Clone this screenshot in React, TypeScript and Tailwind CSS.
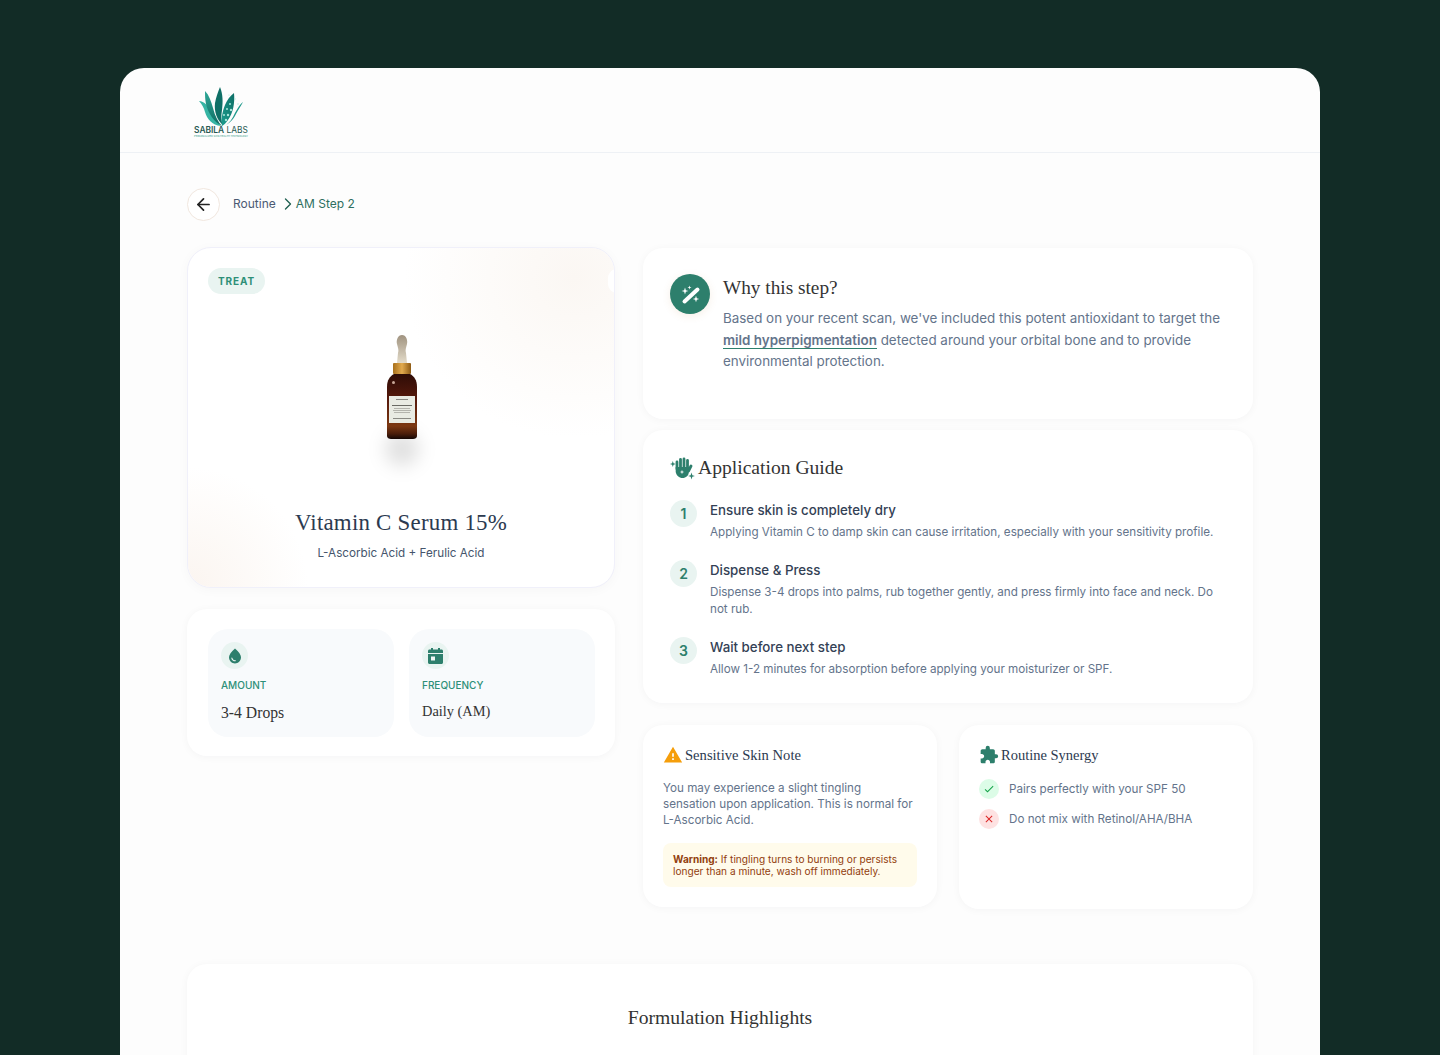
import React from "react";
import { ArrowLeft, ChevronRight } from "lucide-react";
import { MdCheck, MdClose, MdExtension, MdWarning, MdWaterDrop } from "react-icons/md";

const steps = [
    {
        title: "Ensure skin is completely dry",
        body: "Applying Vitamin C to damp skin can cause irritation, especially with your sensitivity profile.",
    },
    {
        title: "Dispense & Press",
        body: "Dispense 3-4 drops into palms, rub together gently, and press firmly into face and neck. Do not rub.",
    },
    {
        title: "Wait before next step",
        body: "Allow 1-2 minutes for absorption before applying your moisturizer or SPF.",
    },
];

const serif = "font-['Liberation_Serif',serif]";

function Logo() {
    return (
        <div className="flex w-[56px] flex-col items-center">
            <svg width="46" height="40" viewBox="0 0 46 40">
                <defs>
                    <linearGradient id="leaf" x1="0" y1="0" x2="0" y2="1">
                        <stop offset="0" stopColor="#2ea898" />
                        <stop offset="1" stopColor="#0f6b62" />
                    </linearGradient>
                    <linearGradient id="dots" x1="1" y1="0" x2="0" y2="1">
                        <stop offset="0" stopColor="#0f6f66" />
                        <stop offset="1" stopColor="#1b9c8e" />
                    </linearGradient>
                </defs>
                <path d="M1 15C6 15 11 20 14 27 16 32 19 36 23 40 14 39 9 33 7 26 6 22 4 18 1 15Z" fill="#36b5a4" />
                <path d="M7 5C11 9 13 15 15 22 17 30 20 36 24 40 16 36 10 27 8 18 7 13 7 9 7 5Z" fill="url(#leaf)" />
                <path d="M22 1C25 8 25 16 24 24 23 30 23 35 25 39 19 34 16 26 17 17 18 11 20 6 22 1Z" fill="#0f6f66" />
                <path d="M36 7C37 17 35 27 30 34 28 37 26 39 24 40 23 34 24 26 27 19 29 14 32 10 36 7Z" fill="url(#dots)" />
                <path d="M45 16C41 19 38 25 35 31 32 36 29 39 25 40 31 38 35 34 38 28 40 24 43 20 45 16Z" fill="#1f9a8c" />
                <g fill="#a7e8dc">
                    <circle cx="30" cy="29" r="1.2" />
                    <circle cx="33" cy="24" r="1.2" />
                    <circle cx="28" cy="34" r="1.2" />
                    <circle cx="29" cy="23" r="1" />
                    <circle cx="26" cy="29" r="1" />
                    <circle cx="32" cy="18" r="1" />
                    <circle cx="37" cy="13" r="0.7" />
                    <circle cx="40" cy="18" r="0.7" />
                    <circle cx="31" cy="9" r="0.6" />
                </g>
            </svg>
            <div className="whitespace-nowrap font-['Inter',sans-serif] text-[8.4px] leading-[9px] text-[#2a5a53]">
                <span className="font-semibold">SABILA</span> LABS
            </div>
            <div className="whitespace-nowrap font-['Inter',sans-serif] text-[2.5px] leading-[3px] text-[#2f9a88]">
                PERSONALIZED SKIN HEALTH TECHNOLOGY
            </div>
        </div>
    );
}

function Bottle() {
    return (
        <svg width="40" height="108" viewBox="0 0 40 108" className="relative">
            <defs>
                <linearGradient id="glass" x1="0" y1="0" x2="0" y2="1">
                    <stop offset="0" stopColor="#2e0c06" />
                    <stop offset="0.4" stopColor="#571a0c" />
                    <stop offset="0.8" stopColor="#7c3812" />
                    <stop offset="0.92" stopColor="#4a1d0a" />
                    <stop offset="1" stopColor="#140705" />
                </linearGradient>
                <linearGradient id="collar" x1="0" y1="0" x2="1" y2="0">
                    <stop offset="0" stopColor="#a8701c" />
                    <stop offset="0.5" stopColor="#e2aa4e" />
                    <stop offset="1" stopColor="#8e5a14" />
                </linearGradient>
                <linearGradient id="bulb" x1="0" y1="0" x2="0" y2="1">
                    <stop offset="0" stopColor="#a09380" />
                    <stop offset="1" stopColor="#e3dbc9" />
                </linearGradient>
            </defs>
            <path d="M20 1C24 1 26 6 25 10 24 14 23 16 24 19L25 29 15 29 16 19C17 16 16 14 15 10 14 6 16 1 20 1Z" fill="url(#bulb)" />
            <rect x="11" y="29" width="18" height="11" rx="1" fill="url(#collar)" />
            <path d="M12 40H28C32 42 35 46 35 53V102C35 104 33 105 31 105H9C7 105 5 104 5 102V53C5 46 8 42 12 40Z" fill="url(#glass)" />
            <rect x="10" y="47" width="3" height="3" rx="1.5" fill="#c9a898" />
            <rect x="7" y="62" width="26" height="27" fill="#e9ebe3" />
            <rect x="14" y="65" width="12" height="1" fill="#8a8a84" />
            <rect x="10" y="71" width="20" height="1" fill="#6a6a64" />
            <rect x="12" y="74" width="16" height="1" fill="#b4b4ad" />
            <rect x="11" y="76" width="18" height="1" fill="#b4b4ad" />
            <rect x="12" y="78" width="16" height="1" fill="#b4b4ad" />
            <rect x="11" y="84" width="18" height="1" fill="#8a8a84" />
        </svg>
    );
}

function Sparkle({ x, y, r, fill }: { x: number; y: number; r: number; fill: string }) {
    const k = r * 0.25;
    return (
        <path
            d={`M${x} ${y - r}L${x + k} ${y - k}L${x + r} ${y}L${x + k} ${y + k}L${x} ${y + r}L${x - k} ${y + k}L${x - r} ${y}L${x - k} ${y - k}Z`}
            fill={fill}
        />
    );
}

function WandIcon() {
    return (
        <svg width="22" height="22" viewBox="0 0 22 22">
            <path d="M5.5 18.5L18.5 6.5" stroke="#fff" strokeWidth="4" strokeLinecap="round" />
            <Sparkle x={6} y={8} r={3.4} fill="#fff" />
            <Sparkle x={10.5} y={4.5} r={2} fill="#fff" />
            <Sparkle x={17} y={16} r={3.2} fill="#fff" />
        </svg>
    );
}

function HandIcon() {
    return (
        <svg width="25" height="24" viewBox="0 0 25 24">
            <g stroke="#2d7f6c" strokeWidth="2.8" strokeLinecap="round">
                <path d="M7 6V13" />
                <path d="M10.5 3.5V12" />
                <path d="M14 3V12" />
                <path d="M17.5 4.5V13" />
                <path d="M21 10L18.5 15" />
            </g>
            <path d="M5.7 11H18.8V16C18.8 19.5 16 22 12.5 22 9 22 6.5 19.5 5.7 16Z" fill="#2d7f6c" />
            <Sparkle x={2.8} y={8} r={3} fill="#2d7f6c" />
            <Sparkle x={21.5} y={20} r={3.4} fill="#2d7f6c" />
            <Sparkle x={12} y={16} r={2.2} fill="#fff" />
        </svg>
    );
}

function CalendarIcon() {
    return (
        <svg width="15" height="16" viewBox="0 0 15 16">
            <rect x="3" y="0" width="2" height="3" fill="#2d7f6c" />
            <rect x="10" y="0" width="2" height="3" fill="#2d7f6c" />
            <path d="M1.5 1.5H13.5C14.3 1.5 15 2.2 15 3V5H0V3C0 2.2.7 1.5 1.5 1.5Z" fill="#2d7f6c" />
            <path d="M0 6H15V14.5C15 15.3 14.3 16 13.5 16H1.5C.7 16 0 15.3 0 14.5Z" fill="#2d7f6c" />
            <rect x="3" y="8.5" width="4" height="4" fill="#eef6f4" />
        </svg>
    );
}

function StatTile({ icon, label, value, valueClass }: { icon: React.ReactNode; label: string; value: string; valueClass: string }) {
    return (
        <div className="h-[108px] flex-1 rounded-[20px] bg-[#f8fafc] px-[13px] pt-[13px]">
            <div className="flex h-[27px] w-[27px] items-center justify-center rounded-full bg-[#e9f4f1] text-[#2d7f6c]">
                {icon}
            </div>
            <p className="mt-[9px] text-[10px] font-medium leading-[15px] text-[#2d8f78]">{label}</p>
            <p className={`${serif} ${valueClass} leading-[20px] text-[#333]`}>{value}</p>
        </div>
    );
}

export default function App() {
    return (
        <div className="h-[1055px] overflow-hidden bg-[#122c26] pt-[68px] font-['Inter',sans-serif]">
            <div className="mx-auto h-[1100px] w-[1200px] rounded-t-[24px] bg-[#fdfdfd]">
                <header className="h-[85px] border-b border-[#eef1f5] pl-[73px] pt-[18px]">
                    <Logo />
                </header>

                <main className="px-[67px]">
                    <nav className="mt-[34px] flex h-[34px] items-center">
                        <button className="flex h-[33px] w-[33px] items-center justify-center rounded-full border border-[#f1e7df] bg-white text-[#222]">
                            <ArrowLeft size={19} strokeWidth={2.2} />
                        </button>
                        <span className="ml-[13px] text-xs leading-[16px] text-[#4b5a73]">Routine</span>
                        <ChevronRight size={20} strokeWidth={1.6} className="ml-[2px] -mr-[2px] text-[#1f5f50]" />
                        <span className="text-xs leading-[16px] text-[#2d6f5f]">AM Step 2</span>
                    </nav>

                    <div className="mt-[26px] flex items-start gap-[28px]">
                        {/* left column */}
                        <div className="flex w-[428px] flex-col gap-[21px]">
                            <section className="relative h-[341px] overflow-hidden rounded-[24px] border border-[#f0f0fa] bg-white shadow-[0_2px_12px_rgba(15,23,42,0.03)]">
                                <div className="absolute -right-[130px] -top-[130px] h-[320px] w-[340px] rounded-full bg-[radial-gradient(closest-side,#fbf7f3,transparent)]" />
                                <div className="absolute -bottom-[120px] -left-[120px] h-[240px] w-[240px] rounded-full bg-[radial-gradient(closest-side,#fbf5f0,transparent)]" />
                                <div className="absolute -right-[12px] top-[21px] h-[24px] w-[18px] rounded-full bg-white" />
                                <div className="relative flex h-full flex-col items-center px-[20px] pt-[20px]">
                                    <span className="self-start rounded-full bg-[#e9f4f1] px-[10px] text-[10px] font-bold leading-[26px] tracking-[0.09em] text-[#2d8f78]">
                                        TREAT
                                    </span>
                                    <div className="relative ml-[2px] mt-[40px] flex h-[108px] w-[40px] justify-center">
                                        <div className="absolute -bottom-[24px] left-[3px] h-[34px] w-[34px] rounded-full bg-[#000]/12 blur-[9px]" />
                                        <Bottle />
                                    </div>
                                    <h1 className={`${serif} mt-[66px] text-[22.9px] leading-[30px] tracking-[0.01em] text-[#2c3a50]`}>
                                        Vitamin C Serum 15%
                                    </h1>
                                    <p className="mt-[7px] text-[11.7px] leading-[16px] text-[#45556c]">L-Ascorbic Acid + Ferulic Acid</p>
                                </div>
                            </section>

                            <section className="flex h-[147px] gap-[15px] rounded-[20px] bg-white pl-[21px] pr-[20px] pt-[20px] shadow-[0_1px_8px_rgba(15,23,42,0.04)]">
                                <StatTile icon={<MdWaterDrop size={18} />} label="AMOUNT" value="3-4 Drops" valueClass="mt-[10px] text-[15.7px]" />
                                <StatTile icon={<CalendarIcon />} label="FREQUENCY" value="Daily (AM)" valueClass="mt-[8px] text-[14.4px]" />
                            </section>
                        </div>

                        {/* right column */}
                        <div className="mt-[1px] flex w-[610px] flex-col">
                            <section className="flex h-[171px] gap-[13px] rounded-[20px] bg-white px-[27px] pt-[26px] shadow-[0_1px_8px_rgba(15,23,42,0.04)]">
                                <div className="flex h-[40px] w-[40px] shrink-0 items-center justify-center rounded-full bg-[#2d7f6c] shadow-[0_2px_8px_rgba(180,120,60,0.12)]">
                                    <WandIcon />
                                </div>
                                <div>
                                    <h2 className={`${serif} text-[19.3px] leading-[28px] text-[#333]`}>Why this step?</h2>
                                    <p className="mt-[6px] text-[13.4px] leading-[21.7px] text-[#64748b]">
                                        Based on your recent scan, we've included this potent antioxidant to target the{" "}
                                        <span className="border-b border-[#2d7f6c] font-semibold">mild hyperpigmentation</span>{" "}
                                        detected around your orbital bone and to provide environmental protection.
                                    </p>
                                </div>
                            </section>

                            <section className="mt-[11px] h-[273px] rounded-[20px] bg-white px-[27px] pt-[24px] shadow-[0_1px_8px_rgba(15,23,42,0.04)]">
                                <div className="flex items-center gap-[3px]">
                                    <HandIcon />
                                    <h2 className={`${serif} text-[19.6px] leading-[28px] text-[#333]`}>Application Guide</h2>
                                </div>
                                <ol className="mt-[18px] flex flex-col gap-[19.5px]">
                                    {steps.map((step, i) => (
                                        <li key={step.title} className="flex gap-[13px]">
                                            <span className="flex h-[27px] w-[27px] shrink-0 items-center justify-center rounded-full bg-[#e9f4f1] text-[14px] font-semibold text-[#2d7f6c]">
                                                {i + 1}
                                            </span>
                                            <div>
                                                <h3 className="text-[13.3px] font-medium leading-[20px] text-[#334155]">{step.title}</h3>
                                                <p className="mt-[4px] text-[11.65px] leading-[16.5px] text-[#64748b]">{step.body}</p>
                                            </div>
                                        </li>
                                    ))}
                                </ol>
                            </section>

                            <div className="mt-[22px] flex items-start gap-[22px]">
                                <section className="h-[182px] flex-1 rounded-[20px] bg-white px-[20px] pt-[19px] shadow-[0_1px_8px_rgba(15,23,42,0.04)]">
                                    <div className="flex items-center gap-[2px]">
                                        <MdWarning size={20} className="text-[#f59e0b]" />
                                        <h2 className={`${serif} text-[14.6px] leading-[22px] text-[#2c3a50]`}>Sensitive Skin Note</h2>
                                    </div>
                                    <p className="mt-[14px] text-[11.65px] leading-[16px] text-[#64748b]">
                                        You may experience a slight tingling sensation upon application. This is normal for L-Ascorbic Acid.
                                    </p>
                                    <div className="mt-[15px] rounded-[8px] bg-[#fffbeb] px-[10px] py-[10px] text-[10.1px] leading-[12px] text-[#92400e]">
                                        <strong className="font-bold">Warning:</strong> If tingling turns to burning or persists longer than a minute, wash off immediately.
                                    </div>
                                </section>

                                <section className="h-[184px] flex-1 rounded-[20px] bg-white px-[20px] pt-[19px] shadow-[0_1px_8px_rgba(15,23,42,0.04)]">
                                    <div className="flex items-center gap-[2px]">
                                        <MdExtension size={20} className="text-[#2d7f6c]" />
                                        <h2 className={`${serif} text-[14.5px] leading-[22px] text-[#2c3a50]`}>Routine Synergy</h2>
                                    </div>
                                    <div className="mt-[13px] flex flex-col gap-[10px]">
                                        <div className="flex items-center gap-[10px]">
                                            <span className="flex h-[20px] w-[20px] items-center justify-center rounded-full bg-[#dcfce7] text-[#16a34a]">
                                                <MdCheck size={12} />
                                            </span>
                                            <span className="text-[11.65px] leading-[20px] text-[#64748b]">Pairs perfectly with your SPF 50</span>
                                        </div>
                                        <div className="flex items-center gap-[10px]">
                                            <span className="flex h-[20px] w-[20px] items-center justify-center rounded-full bg-[#fee2e2] text-[#dc2626]">
                                                <MdClose size={12} />
                                            </span>
                                            <span className="text-[11.65px] leading-[20px] text-[#64748b]">Do not mix with Retinol/AHA/BHA</span>
                                        </div>
                                    </div>
                                </section>
                            </div>
                        </div>
                    </div>

                    <section className="mt-[55px] h-[200px] rounded-[20px] bg-white pt-[40px] text-center shadow-[0_1px_8px_rgba(15,23,42,0.04)]">
                        <h2 className={`${serif} text-[19.6px] leading-[28px] text-[#333]`}>Formulation Highlights</h2>
                    </section>
                </main>
            </div>
        </div>
    );
}
